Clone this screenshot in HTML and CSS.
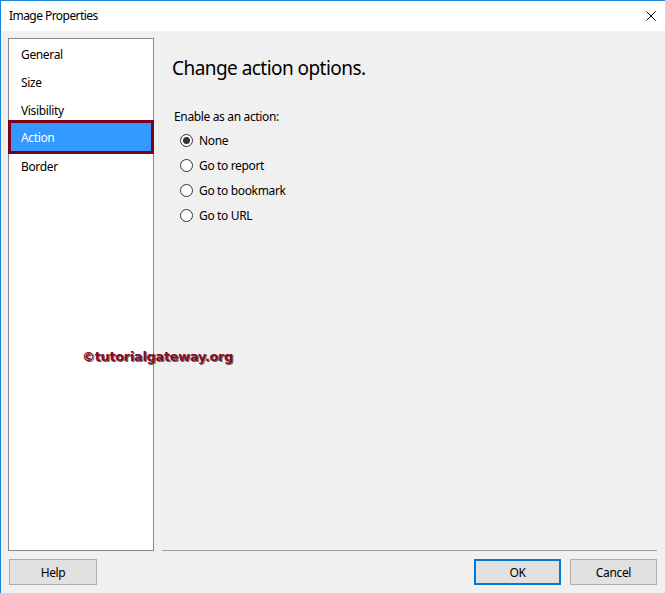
FILE: index.html
```html
<!DOCTYPE html>
<html>
<head>
<meta charset="utf-8">
<link rel="stylesheet" href="styles.css">
</head>
<body>
<div class="window">
  <div class="titlebar">
    <span class="title">Image Properties</span>
    <svg class="close" width="10" height="10" viewBox="0 0 10 10"><path d="M0.5 0.5 L9.5 9.5 M9.5 0.5 L0.5 9.5" stroke="#000" stroke-width="1" fill="none"/></svg>
  </div>
  <div class="body">
    <div class="main">
      <ul class="nav">
        <li class="nav-item">General</li>
        <li class="nav-item">Size</li>
        <li class="nav-item">Visibility</li>
        <li class="nav-item selected">Action</li>
        <li class="nav-item">Border</li>
      </ul>
      <div class="panel">
        <h1 class="heading">Change action options.</h1>
        <div class="group-label">Enable as an action:</div>
        <div class="radios">
          <label class="radio-row"><span class="radio checked"></span>None</label>
          <label class="radio-row"><span class="radio"></span>Go to report</label>
          <label class="radio-row"><span class="radio"></span>Go to bookmark</label>
          <label class="radio-row"><span class="radio"></span>Go to URL</label>
        </div>
      </div>
    </div>
    <div class="footer">
      <button class="btn">Help</button>
      <div class="spacer"></div>
      <button class="btn default">OK</button>
      <button class="btn">Cancel</button>
    </div>
    <div class="watermark">©tutorialgateway.org</div>
  </div>
</div>
</body>
</html>
```
FILE: styles.css
```css
html, body {
  margin: 0;
  padding: 0;
}
body {
  width: 665px;
  height: 593px;
  overflow: hidden;
  font-family: "Noto Sans", "Open Sans", sans-serif;
  font-size: 12px;
  letter-spacing: -0.35px;
  color: #000;
}
.window {
  box-sizing: border-box;
  width: 665px;
  height: 593px;
  border-left: 1px solid #1883d7;
  border-top: 1px solid #1883d7;
  display: flex;
  flex-direction: column;
}
.titlebar {
  height: 30px;
  background: #fff;
  display: flex;
  align-items: center;
  padding: 0 9px 0 8px;
}
.title {
  flex: 1;
  line-height: 16px;
  letter-spacing: -0.55px;
}
.close {
  display: block;
}
.body {
  flex: 1;
  background: #f0f0f0;
  position: relative;
  display: flex;
  flex-direction: column;
}
.main {
  display: flex;
  padding: 7px 8px 0 7px;
}
.nav {
  list-style: none;
  margin: 0;
  padding: 0;
  box-sizing: border-box;
  width: 146px;
  height: 513px;
  border: 1px solid #828790;
  background: #fff;
}
.nav-item {
  height: 28px;
  line-height: 32px;
  padding-left: 12px;
}
.nav-item.selected {
  box-sizing: border-box;
  height: 34px;
  line-height: 30px;
  margin: -3px -1px;
  padding-left: 10px;
  border: 3px solid #7d0016;
  background: #3399ff;
  color: #fff;
  position: relative;
}
.panel {
  flex: 1;
  margin-left: 8px;
  height: 513px;
  box-sizing: border-box;
  border-bottom: 1px solid #a0a0a0;
  padding-left: 10px;
}
.heading {
  margin: 16px 0 0 0;
  font-weight: normal;
  font-size: 19px;
  letter-spacing: -0.55px;
  line-height: 28px;
}
.group-label {
  margin: 27px 0 0 2px;
  line-height: 16px;
}
.radios {
  margin-top: 3px;
  padding-left: 8px;
}
.radio-row {
  display: flex;
  align-items: center;
  height: 25px;
}
.radio {
  box-sizing: border-box;
  width: 13px;
  height: 13px;
  border: 1px solid #333;
  border-radius: 50%;
  background: #fff;
  margin-right: 6px;
  display: flex;
  align-items: center;
  justify-content: center;
}
.radio.checked::after {
  content: "";
  width: 7px;
  height: 7px;
  border-radius: 50%;
  background: #333;
}
.footer {
  display: flex;
  padding: 8px 8px 0 8px;
}
.spacer {
  flex: 1;
}
.btn {
  box-sizing: border-box;
  width: 87px;
  height: 26px;
  font-family: inherit;
  font-size: 12px;
  letter-spacing: -0.35px;
  color: #000;
  background: #e1e1e1;
  border: 1px solid #adadad;
  padding: 0;
  margin: 0;
}
.btn:first-child {
  width: 88px;
}
.btn.default {
  border: 2px solid #0078d7;
  margin-right: 9px;
}
.watermark {
  position: absolute;
  left: 81px;
  top: 318px;
  font-family: "DejaVu Sans", sans-serif;
  font-weight: bold;
  font-size: 13px;
  letter-spacing: -0.35px;
  color: #8b0a1e;
  text-shadow: 1px 1px 0 #6a6a6a;
}
```
